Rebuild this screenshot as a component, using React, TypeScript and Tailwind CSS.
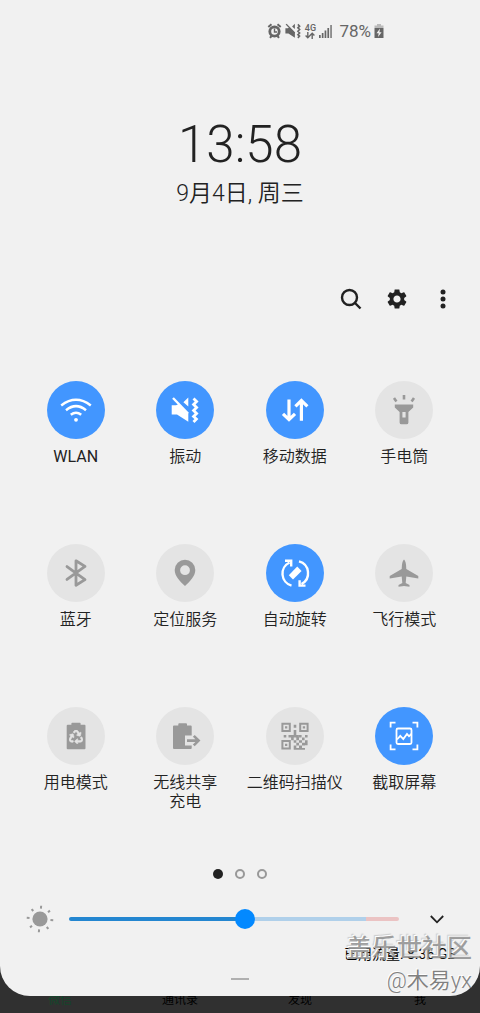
import React, { useState } from 'react';
import { FaRecycle } from 'react-icons/fa';

const WifiIcon = () => (
    <>
        <path d="M3.2 13.4Q18 2.2 32.8 13.4M8 18.2Q18 10 28 18.2M12.8 22.8Q18 18.6 23.2 22.8" fill="none" stroke="currentColor" strokeWidth={2.5} />
        <circle cx={18} cy={27.8} r={1.9} />
    </>
);

const VibrateIcon = () => (
    <>
        <path d="M6 6L21 21.5" fill="none" stroke="currentColor" strokeWidth={2.4} />
        <path d="M4.7 13.3H9L12 12L21.3 21V29.7L10 22.5H4.7ZM21.3 5.5V14.5L16.4 10.2Z" />
        <path d="M26.5 6.5L29.6 9.5L26.6 12.5L29.6 15.5L26.6 18.5L29.6 21.5L26.6 24.5L29.4 27L26.5 30" fill="none" stroke="currentColor" strokeWidth={2.8} />
    </>
);

const DataIcon = () => (
    <path d="M12 7.5V27M6 21.8L12 27.6L18 21.8M24.4 28.7V9.5M18.4 14.4L24.4 8.6L30.4 14.4" fill="none" stroke="currentColor" strokeWidth={3.2} />
);

const TorchIcon = () => (
    <>
        <path d="M18 3V7.4M8 6L10.4 9.4M28 6L25.6 9.4" fill="none" stroke="currentColor" strokeWidth={2.6} />
        <path fillRule="evenodd" d="M8.8 12.6H27.2V15.4L22.4 20V30.4Q22.4 32.3 20.5 32.3H15.5Q13.6 32.3 13.6 30.4V20L8.8 15.4ZM16.4 20V25.4H19.6V20Z" />
    </>
);

const BluetoothIcon = () => (
    <path d="M9 11.6L27 24.6L18 30.2V5.8L27 11.4L9 24.4" fill="none" stroke="currentColor" strokeWidth={2.8} strokeLinejoin="round" strokeLinecap="round" />
);

const LocationIcon = () => (
    <path fillRule="evenodd" d="M18 4.7A10.3 10.3 0 0 0 7.7 15C7.7 21 13 26.5 18 31C23 26.5 28.3 21 28.3 15A10.3 10.3 0 0 0 18 4.7ZM18 10.3A4.9 4.9 0 1 1 18 20.1A4.9 4.9 0 1 1 18 10.3Z" />
);

const RotateIcon = () => (
    <>
        <path d="M14.5 30.6A12.4 12.4 0 0 1 12.5 7.5M22 6.4A12.2 12.2 0 0 1 24.5 29M8 5.7H14.2V11.5M28.5 30.6H22.6V25.2" fill="none" stroke="currentColor" strokeWidth={2.4} />
        <path d="M11.8 20.2L20.2 11.5L24.6 15.9L16 24.6Z" />
    </>
);

const PlaneIcon = () => (
    <path d="M18 4.5Q20.2 6 20.3 14L32.3 21V23.5L20.3 21.5L19.7 28L23.5 30V31.8L18 31L12.5 31.8V30L16.3 28L15.7 21.5L3.7 23.5V21L15.7 14Q15.8 6 18 4.5Z" />
);

const PowerModeIcon = () => (
    <>
        <path d="M9.7 6.7H13.4V5.5Q13.4 4.7 14.2 4.7H21.8Q22.6 4.7 22.6 5.5V6.7H26.5Q27.5 6.7 27.5 7.7V30.3Q27.5 31.3 26.5 31.3H9.7Q8.7 31.3 8.7 30.3V7.7Q8.7 6.7 9.7 6.7Z" />
        <FaRecycle x={11} y={12} size={14} stroke="#e4e4e4" strokeWidth={20} className="text-[#e4e4e4]" />
    </>
);

const PowerShareIcon = () => (
    <>
        <path d="M7 7.5H11.3V6.2Q11.3 5.3 12.2 5.3H19Q20 5.3 20 6.2V7.5H23.7Q24.7 7.5 24.7 8.5V17.5H18V27.5H24.7V30Q24.7 31 23.7 31H7Q6 31 6 30V8.5Q6 7.5 7 7.5Z" />
        <path d="M20 22.6H31M26.8 17.8L31.6 22.6L26.8 27.4" fill="none" stroke="currentColor" strokeWidth={2.6} />
    </>
);

const QrIcon = () => (
    <>
        <path d="M5.4 5.7H12.8V13.1H5.4ZM23.2 5.7H30.6V13.1H23.2ZM5.4 23.1H12.8V30.5H5.4Z" fill="none" stroke="currentColor" strokeWidth={2} />
        <path d="M8 8.3h2.3v2.3H8zM25.8 8.3h2.3v2.3h-2.3zM8 25.7h2.3V28H8zM16.7 6.7h2.6v3h-2.6zM16.7 12h2.6v5h2.6v2.6h-5.2v2.6h-2.6v-2.6h-2.6V17h5.2zM6.7 17h2.6v2.6H6.7zM22 17h2.6v2.6H22zM28 17h2.6v2.6H28zM25 19.6h2.6v2.6H25zM19.3 19.6H22v2.6h-2.7zM16.7 22.2h2.6v2.6h-2.6zM22 22.2h3v2.6h-3zM28 22.2h2.6v5H28zM19.3 24.8H22v2.6h-2.7zM25 24.8h3v2.6h-3zM16.7 27.4h2.6v2.6h2.7v-2.6h3V30h3v1.8H16.7z" />
    </>
);

const CaptureIcon = () => (
    <>
        <path d="M4.6 9.5V4.6H9.5M26.5 4.6H31.4V9.5M31.4 26.5V31.4H26.5M9.5 31.4H4.6V26.5" fill="none" stroke="currentColor" strokeWidth={1.8} />
        <rect x={10.5} y={10.5} width={15} height={15.5} rx={1.5} fill="none" stroke="currentColor" strokeWidth={1.8} />
        <path d="M11 21.5L14.3 17.8L17.3 21L21 16L23 18.3L25.3 16" fill="none" stroke="currentColor" strokeWidth={1.8} />
    </>
);

const TILES = [
    { label: 'WLAN', icon: WifiIcon, on: true, weight: 'font-normal' },
    { label: '振动', icon: VibrateIcon, on: true },
    { label: '移动数据', icon: DataIcon, on: true },
    { label: '手电筒', icon: TorchIcon, on: false },
    { label: '蓝牙', icon: BluetoothIcon, on: false },
    { label: '定位服务', icon: LocationIcon, on: false },
    { label: '自动旋转', icon: RotateIcon, on: true },
    { label: '飞行模式', icon: PlaneIcon, on: false },
    { label: '用电模式', icon: PowerModeIcon, on: false },
    { label: '无线共享\n充电', icon: PowerShareIcon, on: false },
    { label: '二维码扫描仪', icon: QrIcon, on: false },
    { label: '截取屏幕', icon: CaptureIcon, on: true },
];

const StatusBar = () => (
    <div className="flex h-[22px] items-center justify-end gap-[3px] pr-24 text-[#666]">
        <svg width="15" height="16" viewBox="0 0 14 16" fill="none" stroke="currentColor">
            <circle cx="7" cy="8.5" r="4.7" strokeWidth="2.8" />
            <path d="M7 5.5V9H9.5" strokeWidth="1.4" />
            <path d="M.8 4L4 1.3M13.2 4L10 1.3M2.5 14.8L4 13M11.5 14.8L10 13" strokeWidth="2" />
        </svg>
        <svg width="16" height="16" viewBox="4 4 28 28" fill="currentColor">
            <VibrateIcon />
        </svg>
        <div className="flex w-3 flex-col items-center">
            <span className="text-[9px] leading-[8px] font-medium">4G</span>
            <svg width="10" height="7" viewBox="0 0 10 7" fill="none" stroke="currentColor" strokeWidth="1.4">
                <path d="M2.8 0V5.5M.6 3.5L2.8 5.8L5 3.5M7.2 7V1.5M5 3.5L7.2 1.2L9.4 3.5" />
            </svg>
        </div>
        <svg width="13" height="14" viewBox="0 0 13 14" fill="currentColor">
            <path d="M0 11h1.7v3H0zM2.8 9h1.7v5H2.8zM5.6 6.5h1.7V14H5.6zM8.4 4h1.7v10H8.4z" />
            <path d="M11.2 1h1.7v13h-1.7z" opacity=".8" />
        </svg>
        <span className="pl-1 text-[17px] leading-[22px]">78%</span>
        <svg width="10" height="16" viewBox="0 0 10 16">
            <path d="M.5 5V2.5H3V1H7V2.5H9.5V5Z" fill="#bbb" />
            <path d="M.5 5H9.5V15H.5Z" fill="currentColor" />
            <path d="M6 5.5L2.5 10.3H4.7L4 14L7.6 9.2H5.4Z" fill="#f1f1f1" />
        </svg>
    </div>
);

const SunIcon = () => (
    <svg width="28" height="28" viewBox="0 0 28 28" fill="#999" stroke="#999">
        <circle cx="14" cy="14" r="7.6" stroke="none" />
        <path
            transform="rotate(5 14 14)"
            d="M14 .7V3.5M14 24.5V27.3M.7 14H3.5M24.5 14H27.3M4.8 4.8L6.6 6.6M21.4 21.4L23.2 23.2M4.8 23.2L6.6 21.4M21.4 6.6L23.2 4.8"
            strokeWidth="2"
        />
    </svg>
);

export default function App() {
    const [active, setActive] = useState(TILES.map((tile) => tile.on));
    const [brightness, setBrightness] = useState(535);

    const toggle = (index: number) => {
        setActive(active.map((on, i) => (i === index ? !on : on)));
    };

    const filled = `${brightness / 10}%`;

    return (
        <div className="relative flex min-h-screen flex-col bg-[#303030] font-[Roboto,'Noto_Sans_CJK_SC',sans-serif] text-[#222]">
            <main className="relative z-10 flex flex-col rounded-b-[30px] bg-[#f1f1f1] pt-5 pb-4">
                <StatusBar />

                <header className="mt-[73px] flex flex-col items-center">
                    <time className="text-[51px] leading-[60px] font-light">13:58</time>
                    <p className="mt-1 text-[23px] leading-[30px] font-[350]">9月4日, 周三</p>
                </header>

                <div className="mt-[74px] flex justify-end gap-[14px] px-[21px]">
                    <button aria-label="搜索" className="flex size-8 items-center justify-center">
                        <svg width="22" height="22" viewBox="0 0 22 22" fill="none" stroke="currentColor" strokeWidth="2.4">
                            <circle cx="9.5" cy="9.5" r="7.5" />
                            <path d="M15 15L20.5 20.5" />
                        </svg>
                    </button>
                    <button aria-label="设置" className="flex size-8 items-center justify-center">
                        <svg width="24" height="24" viewBox="0 0 24 24" fill="currentColor">
                            <path d="M19.14 12.94c.04-.3.06-.61.06-.94s-.02-.64-.07-.94l2.03-1.58c.18-.14.23-.41.12-.61l-1.92-3.32c-.12-.22-.37-.29-.59-.22l-2.39.96c-.5-.38-1.03-.7-1.62-.94l-.36-2.54c-.04-.24-.24-.41-.48-.41h-3.84c-.24 0-.43.17-.47.41l-.36 2.54c-.59.24-1.13.57-1.62.94l-2.39-.96c-.22-.08-.47 0-.59.22L2.74 8.87c-.12.21-.08.47.12.61l2.03 1.58c-.05.3-.09.63-.09.94s.02.64.07.94l-2.03 1.58c-.18.14-.23.41-.12.61l1.92 3.32c.12.22.37.29.59.22l2.39-.96c.5.38 1.03.7 1.62.94l.36 2.54c.05.24.24.41.48.41h3.84c.24 0 .44-.17.47-.41l.36-2.54c.59-.24 1.13-.56 1.62-.94l2.39.96c.22.08.47 0 .59-.22l1.92-3.32c.12-.22.07-.47-.12-.61l-2.01-1.58zM12 15.6c-1.98 0-3.6-1.62-3.6-3.6s1.62-3.6 3.6-3.6 3.6 1.62 3.6 3.6-1.62 3.6-3.6 3.6z" />
                        </svg>
                    </button>
                    <button aria-label="更多选项" className="flex size-8 items-center justify-center">
                        <svg width="6" height="20" viewBox="0 0 6 20" fill="currentColor">
                            <circle cx="3" cy="3" r="2.5" />
                            <circle cx="3" cy="10" r="2.5" />
                            <circle cx="3" cy="17" r="2.5" />
                        </svg>
                    </button>
                </div>

                <div className="mt-[66px] grid grid-cols-4 gap-y-[59px] px-[21px]">
                    {TILES.map(({ label, icon: Icon, weight = 'font-[350]' }, i) => (
                        <button
                            key={label}
                            aria-pressed={active[i]}
                            onClick={() => toggle(i)}
                            className="flex h-[104px] flex-col items-center gap-2"
                        >
                            <span
                                className={`flex size-[58px] shrink-0 items-center justify-center rounded-full ${
                                    active[i] ? 'bg-[#4296ff] text-white' : 'bg-[#e4e4e4] text-[#999]'
                                }`}
                            >
                                <svg width="36" height="36" viewBox="0 0 36 36" fill="currentColor">
                                    <Icon />
                                </svg>
                            </span>
                            <span className={`text-base leading-[19px] whitespace-pre ${weight}`}>{label}</span>
                        </button>
                    ))}
                </div>

                <div className="mt-[58px] flex justify-center gap-3">
                    <span className="size-[10px] rounded-full bg-[#222]" />
                    <span className="size-[10px] rounded-full border-2 border-[#999]" />
                    <span className="size-[10px] rounded-full border-2 border-[#999]" />
                </div>

                <div className="mt-[26px] flex h-7 items-center pr-[31px] pl-[26px]">
                    <SunIcon />
                    <input
                        type="range"
                        aria-label="亮度"
                        min={0}
                        max={1000}
                        value={brightness}
                        onChange={(e) => setBrightness(Number(e.target.value))}
                        className="mr-[26px] ml-[15px] h-1 min-w-0 flex-1 appearance-none rounded-full [&::-webkit-slider-thumb]:size-5 [&::-webkit-slider-thumb]:appearance-none [&::-webkit-slider-thumb]:rounded-full [&::-webkit-slider-thumb]:bg-[#0389ff]"
                        style={{ background: `linear-gradient(to right, #2386d0 ${filled}, #b0d0ea ${filled}, #b0d0ea 90%, #ebc3c3 90%)` }}
                    />
                    <button aria-label="展开" className="flex h-7 w-6 items-center justify-center">
                        <svg width="14" height="9" viewBox="0 0 14 9" fill="none" stroke="currentColor" strokeWidth="1.8">
                            <path d="M.8 1L7 7.3L13.2 1" />
                        </svg>
                    </button>
                </div>

                <p className="mt-[11px] pr-6 text-right text-sm leading-5 text-black">已用流量: 8.36 GB</p>
                <span className="mt-[14px] h-[2px] w-[18px] self-center bg-[#b0b0b0]" />
            </main>

            <nav className="-mt-1 grid h-[21px] grid-cols-4 text-center text-xs leading-4 text-black">
                <a href="#chats" className="text-[#14462b]">微信</a>
                <a href="#contacts">通讯录</a>
                <a href="#discover">发现</a>
                <a href="#me">我</a>
            </nav>

            <div className="pointer-events-none absolute right-2 bottom-4 z-20 flex flex-col items-end">
                <span className="text-[25px] leading-8 font-medium text-[#808080]/75 [text-shadow:-1px_-1px_0_#fff,-2px_-2px_1px_#ccc]">盖乐世社区</span>
                <span className="text-[22px] leading-8 font-[350] text-[#808080] [text-shadow:-1px_-1px_0_#fff]">@木易yx</span>
            </div>
        </div>
    );
}
